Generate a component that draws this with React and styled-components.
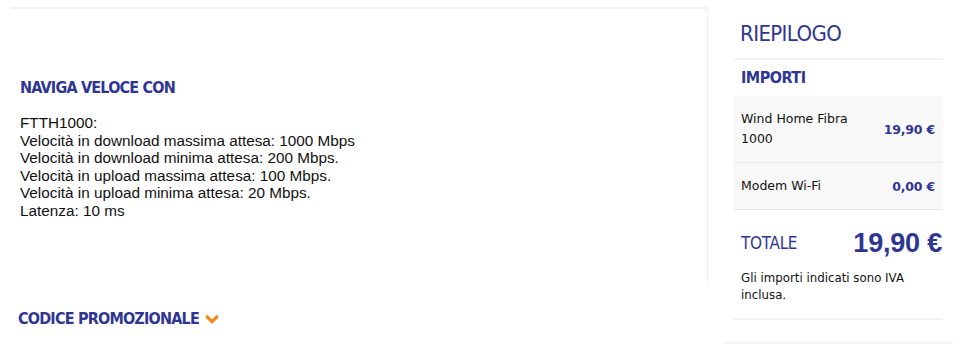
import React from "react";
import styled, { createGlobalStyle } from "styled-components";

const Global = createGlobalStyle`
  html, body {
    margin: 0;
    padding: 0;
    background: #fff;
  }
  body {
    font-family: "Liberation Sans", Arial, sans-serif;
    color: #111;
  }
`;

const BLUE = "#2f3691";
const NARROW = `"DejaVu Sans Condensed", "Liberation Sans", sans-serif`;
const SMALL = `"DejaVu Sans", Verdana, sans-serif`;

const Page = styled.div`
  display: flex;
  align-items: flex-start;
  width: 968px;
  height: 344px;
  overflow: hidden;
`;

const Main = styled.div`
  width: 700px;
  margin-left: 8px;
  padding-top: 7px;
`;

const InfoBox = styled.div`
  height: 278px;
  margin-left: 2px;
  border-top: 2px solid #f1f1f1;
  border-right: 1px solid #eeeeee;
  padding: 70px 0 0 10px;
  box-sizing: border-box;
`;

const Heading = styled.h3`
  margin: 0 0 17px;
  font-family: ${NARROW};
  font-weight: 700;
  font-size: 16px;
  line-height: 18px;
  letter-spacing: -0.8px;
  color: ${BLUE};
`;

const Specs = styled.div`
  font-size: 15.3px;
  line-height: 17.6px;
  color: #111;
`;

const Promo = styled.button`
  display: flex;
  align-items: center;
  gap: 6px;
  margin: 25px 0 0 10px;
  padding: 0;
  border: 0;
  background: none;
  cursor: pointer;
  font-family: ${NARROW};
  font-weight: 700;
  font-size: 16px;
  line-height: 18px;
  letter-spacing: -0.8px;
  color: ${BLUE};
`;

const Side = styled.div`
  width: 209px;
  margin-left: 26px;
`;

const SideTitle = styled.h2`
  margin: 0;
  padding: 21px 6px 11px;
  font-family: ${NARROW};
  font-weight: 400;
  font-size: 22px;
  line-height: 26px;
  letter-spacing: -0.6px;
  color: ${BLUE};
  border-bottom: 2px solid #f1f1f1;
`;

const SubTitle = styled.h4`
  margin: 0;
  padding: 9px 7px 9px;
  font-family: ${NARROW};
  font-weight: 700;
  font-size: 16px;
  line-height: 18px;
  letter-spacing: -0.5px;
  color: ${BLUE};
`;

const Items = styled.div`
  background: #f8f8f8;
`;

const Item = styled.div`
  display: flex;
  align-items: center;
  justify-content: space-between;
  min-height: ${(p) => p.$h}px;
  padding: 0 8px 0 7px;
  box-sizing: border-box;
  border-bottom: 1px solid #e6e6e6;
`;

const ItemName = styled.span`
  font-family: ${SMALL};
  font-size: 12.5px;
  line-height: 20px;
  width: 112px;
`;

const ItemPrice = styled.span`
  font-family: ${SMALL};
  font-weight: 700;
  font-size: 12.5px;
  letter-spacing: -0.2px;
  color: ${BLUE};
`;

const Total = styled.div`
  display: flex;
  align-items: center;
  justify-content: space-between;
  padding: 18px 1px 0 7px;
`;

const TotalLabel = styled.span`
  font-family: ${NARROW};
  font-size: 17px;
  letter-spacing: -0.3px;
  color: ${BLUE};
`;

const TotalPrice = styled.span`
  font-family: "Liberation Sans", Arial, sans-serif;
  font-weight: 700;
  font-size: 27px;
  line-height: 30px;
  letter-spacing: -0.2px;
  color: ${BLUE};
`;

const Note = styled.p`
  margin: 0;
  padding: 12px 7px 14px;
  font-family: ${SMALL};
  font-size: 11.8px;
  line-height: 17px;
  border-bottom: 2px solid #f1f1f1;
`;

const NextBox = styled.div`
  margin: 22px -10px 0 -11px;
  border-top: 2px solid #f4f4f4;
`;

const Chevron = () => (
  <svg width="14" height="11" viewBox="0 0 14 11">
    <path
      d="M2.2 2.8 L7 7.6 L11.8 2.8"
      fill="none"
      stroke="#f7871f"
      strokeWidth="3.3"
      strokeLinecap="round"
      strokeLinejoin="miter"
    />
  </svg>
);

const specs = [
  "FTTH1000:",
  "Velocità in download massima attesa: 1000 Mbps",
  "Velocità in download minima attesa: 200 Mbps.",
  "Velocità in upload massima attesa: 100 Mbps.",
  "Velocità in upload minima attesa: 20 Mbps.",
  "Latenza: 10 ms",
];

const items = [
  { name: "Wind Home Fibra 1000", price: "19,90 €", h: 67 },
  { name: "Modem Wi-Fi", price: "0,00 €", h: 47 },
];

export default function App() {
  return (
    <>
      <Global />
      <Page>
        <Main>
          <InfoBox>
            <Heading>NAVIGA VELOCE CON</Heading>
            <Specs>
              {specs.map((s) => (
                <div key={s}>{s}</div>
              ))}
            </Specs>
          </InfoBox>
          <Promo>
            CODICE PROMOZIONALE <Chevron />
          </Promo>
        </Main>
        <Side>
          <SideTitle>RIEPILOGO</SideTitle>
          <SubTitle>IMPORTI</SubTitle>
          <Items>
            {items.map((it) => (
              <Item key={it.name} $h={it.h}>
                <ItemName>{it.name}</ItemName>
                <ItemPrice>{it.price}</ItemPrice>
              </Item>
            ))}
          </Items>
          <Total>
            <TotalLabel>TOTALE</TotalLabel>
            <TotalPrice>19,90 €</TotalPrice>
          </Total>
          <Note>Gli importi indicati sono IVA inclusa.</Note>
          <NextBox />
        </Side>
      </Page>
    </>
  );
}
